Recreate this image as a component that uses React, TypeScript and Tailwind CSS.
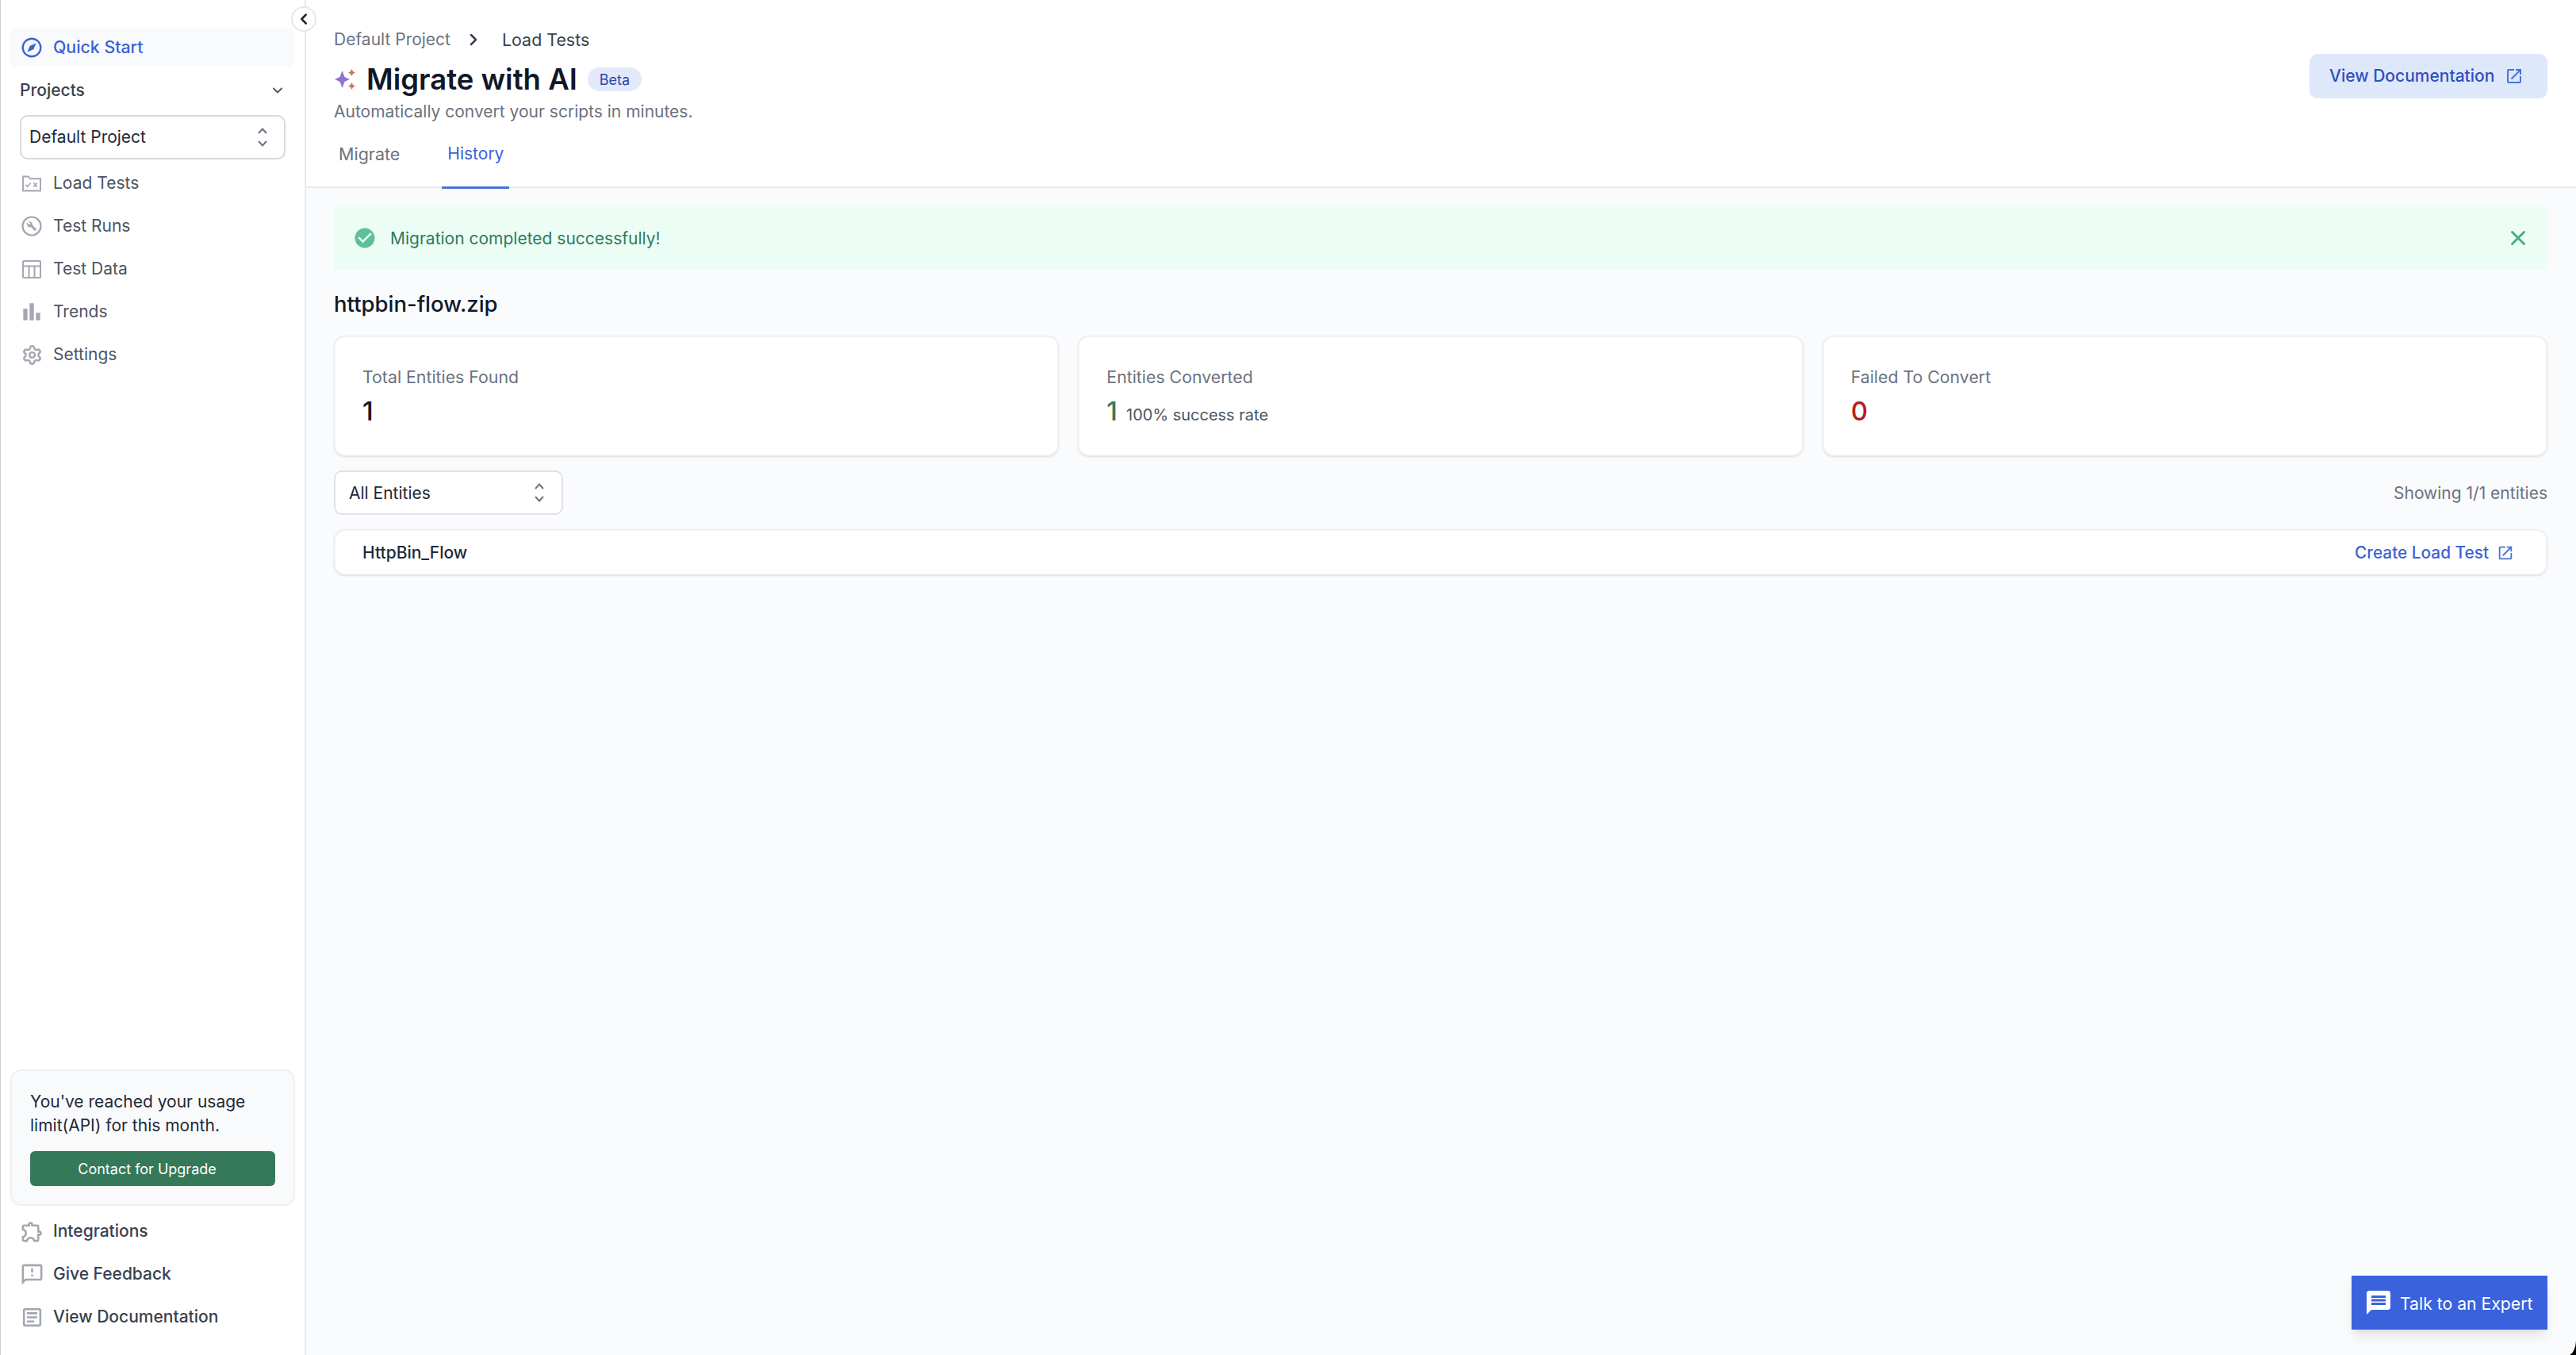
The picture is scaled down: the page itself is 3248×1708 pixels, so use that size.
import { ChevronDown, ChevronLeft, ChevronRight, Settings, X } from 'lucide-react'
import { MdBarChart, MdCheckCircle, MdMessage, MdOpenInNew, MdOutlineArticle, MdOutlineExtension, MdOutlineFeedback } from 'react-icons/md'

function CompassIcon() {
  return (
    <svg viewBox="0 0 26 26" className="h-[26px] w-[26px] shrink-0" fill="none">
      <circle cx="13" cy="13" r="11.3" stroke="#3b62d6" strokeWidth="2.4" />
      <path d="M18.500 7.500l-3.200 7.800-7.800 3.200 3.200-7.800z" fill="#3b62d6" />
    </svg>
  )
}

function LoadTestsIcon() {
  return (
    <svg viewBox="0 0 26 22" className="h-[21px] w-[26px] shrink-0" fill="none" stroke="#a3a8b0">
      <path d="M1.500 20.500V1.500h7l2.500 3h13.500v16z" strokeWidth="2" />
      <path d="M5 12.500l2.500 2.500 4-5" strokeWidth="1.8" />
      <path d="M15.500 10l4.500 5M20 10l-4.500 5" strokeWidth="1.8" />
    </svg>
  )
}

function TestRunsIcon() {
  return (
    <svg viewBox="0 0 26 26" className="h-[26px] w-[26px] shrink-0" fill="none">
      <circle cx="13" cy="13" r="11.500" stroke="#a3a8b0" strokeWidth="2.2" />
      <path d="M8.500 7.500a4.400 4.400 0 0 1 5.700 4.600l5 5-2.200 2.200-5-5a4.400 4.400 0 0 1-5-5.700l3 2.600 1.700-1.700z" fill="#a3a8b0" />
    </svg>
  )
}

function TestDataIcon() {
  return (
    <svg viewBox="0 0 24 23" className="h-[23px] w-[24px] shrink-0" fill="none" stroke="#a3a8b0" strokeWidth="2">
      <rect x="1" y="1" width="22" height="21" rx="1" />
      <path d="M1 7.500h22M8.500 7.500V22M15.500 7.500V22" />
    </svg>
  )
}

function Sparkles() {
  return (
    <svg viewBox="0 0 26 26" className="ml-[1px] h-[26px] w-[26px] shrink-0">
      <defs>
        <linearGradient id="spark" x1="0" y1="0" x2="1" y2="1">
          <stop offset="0" stopColor="#6f7ce0" />
          <stop offset="1" stopColor="#b06cc0" />
        </linearGradient>
      </defs>
      <path d="M9.500 2l3 8 6.500 3-6.500 3-3 8-3-8L0 13l6.500-3z" fill="url(#spark)" />
      <path d="M21.500 0l1.500 3 3 1.500-3 1.500-1.500 3-1.500-3-3-1.500 3-1.500z" fill="#d9695f" />
      <path d="M21.500 17l1.500 3 3 1.500-3 1.500-1.500 3-1.500-3-3-1.500 3-1.500z" fill="#d9695f" />
    </svg>
  )
}

function UpDown() {
  return (
    <svg viewBox="0 0 12 24" className="h-[24px] w-[12px] shrink-0" fill="none" stroke="#6b7280" strokeWidth="2">
      <path d="M1 7l5-5.500L11 7M1 17l5 5.500L11 17" />
    </svg>
  )
}

function NavItem({ icon, label, strong }: { icon: React.ReactNode; label: string; strong?: boolean }) {
  return (
    <div className="flex h-[54px] items-center pl-[26px]">
      <span className="flex w-[26px] justify-center">{icon}</span>
      <span className={`ml-[14px] text-[21px] ${strong ? 'font-medium text-[#374151]' : 'text-[#4b5563]'}`}>{label}</span>
    </div>
  )
}

function StatCard({ label, children }: { label: string; children: React.ReactNode }) {
  return (
    <div className="h-[152px] flex-1 rounded-[14px] border-2 border-[#f0f1f3] bg-white pl-[34px] pt-[36px] shadow-sm">
      <p className="text-[21.300px] leading-[28px] text-[#6b7280]">{label}</p>
      <div className="mt-[9px] flex items-baseline">{children}</div>
    </div>
  )
}

export default function App() {
  return (
    <div className="relative flex h-[1708px] w-[3248px] overflow-hidden bg-[#fafbfd] font-['Inter',sans-serif] antialiased">
      {/* Sidebar */}
      <aside className="flex w-[386px] shrink-0 flex-col border-l border-r-2 border-l-[#cfcfcf] border-r-[#e8eaed] bg-white">
        <div className="ml-[11px] mr-[12px] mt-[36px] flex h-[48px] items-center rounded-lg bg-[#f9fafb] pl-[15px]">
          <CompassIcon />
          <span className="ml-[14px] text-[21.300px] font-medium text-[#3b62d6]">Quick Start</span>
        </div>
        <div className="mt-[14px] flex h-[32px] items-center justify-between pl-[24px] pr-[24px]">
          <span className="text-[21px] font-medium text-[#374151]">Projects</span>
          <ChevronDown size={20} strokeWidth={2.2} className="text-[#4b5563]" />
        </div>
        <div className="mx-[24px] mt-[15px] flex h-[56px] items-center justify-between rounded-[10px] border-2 border-[#d7d9dd] pl-[10px] pr-[21px]">
          <span className="text-[21px] text-[#1f2937]">Default Project</span>
          <UpDown />
        </div>
        <div className="mt-[3px]">
          <NavItem icon={<LoadTestsIcon />} label="Load Tests" />
          <NavItem icon={<TestRunsIcon />} label="Test Runs" />
          <NavItem icon={<TestDataIcon />} label="Test Data" />
          <NavItem icon={<MdBarChart size={32} className="shrink-0 text-[#a3a8b0]" />} label="Trends" />
          <NavItem icon={<Settings size={27} strokeWidth={2.2} className="shrink-0 text-[#a3a8b0]" />} label="Settings" />
        </div>
        <div className="mx-[12px] mt-auto h-[172px] rounded-[14px] border-2 border-[#eef0f2] bg-[#f9fafb] px-[23px] pt-[24px]">
          <p className="text-[21px] leading-[30px] text-[#1f2937]">You've reached your usage limit(API) for this month.</p>
          <button className="mt-[17px] h-[44px] w-[309px] rounded-[6px] bg-[#35795a] pr-[14px] text-[18px] text-white">Contact for Upgrade</button>
        </div>
        <div className="mb-[21px] mt-[5px]">
          <NavItem strong icon={<MdOutlineExtension size={31} className="shrink-0 text-[#a3a8b0]" />} label="Integrations" />
          <NavItem strong icon={<MdOutlineFeedback size={31} className="shrink-0 text-[#a3a8b0]" />} label="Give Feedback" />
          <NavItem strong icon={<MdOutlineArticle size={31} className="shrink-0 text-[#a3a8b0]" />} label="View Documentation" />
        </div>
      </aside>

      {/* Main */}
      <main className="flex min-w-0 flex-1 flex-col">
        <header className="flex h-[237px] shrink-0 justify-between border-b-2 border-[#e8eaed] bg-white pl-[35px] pr-[36px]">
          <div>
            <div className="mt-[36px] flex h-[28px] items-center text-[21px]">
              <span className="text-[#6b7280]">Default Project</span>
              <ChevronRight size={24} strokeWidth={2.5} className="ml-[17px] text-[#374151]" />
              <span className="ml-[24px] text-[21.400px] text-[#374151]">Load Tests</span>
            </div>
            <div className="mt-[16px] flex h-[40px] items-center">
              <Sparkles />
              <h1 className="ml-[14px] text-[36.500px] font-semibold leading-none text-[#111827]">Migrate with AI</h1>
              <span className="ml-[13px] flex h-[30px] w-[68px] items-center justify-center rounded-full bg-[#e1e9fb] text-[18px] text-[#2f45a8]">Beta</span>
            </div>
            <p className="mt-[7px] text-[21px] leading-[28px] text-[#6b7280]">Automatically convert your scripts in minutes.</p>
            <div className="mt-[13px] flex h-[70px]">
              <span className="px-[6px] pt-[12px] text-[21.500px] leading-[28px] text-[#6b7280]">Migrate</span>
              <span className="ml-[47px] border-b-[3px] border-[#4a73d8] px-[7px] pt-[12px] text-[21px] leading-[28px] text-[#3b62d6]">History</span>
            </div>
          </div>
          <button className="mt-[68px] flex h-[56px] w-[300px] items-center rounded-[10px] bg-[#dde8fb] pl-[25px] text-[21px] font-medium text-[#2f4fc0]">
            View Documentation
            <MdOpenInNew size={24} className="ml-[13px] text-[#4a73d8]" />
          </button>
        </header>

        <section className="flex flex-1 flex-col pl-[35px] pr-[36px] pt-[22px]">
          <div className="flex h-[81px] items-center justify-between bg-[#ecfdf5] pl-[24px] pr-[22px]">
            <div className="flex items-center">
              <MdCheckCircle size={30} className="text-[#5cc098]" />
              <span className="ml-[17px] pt-[2px] text-[21px] text-[#2f7a5c]">Migration completed successfully!</span>
            </div>
            <X size={30} strokeWidth={2.4} className="text-[#4faa86]" />
          </div>

          <h2 className="mt-[26px] text-[27.500px] font-medium leading-[34px] text-[#111827]">httpbin-flow.zip</h2>

          <div className="mt-[23px] flex gap-[24px]">
            <StatCard label="Total Entities Found">
              <span className="text-[33px] font-medium leading-[40px] text-[#111827]">1</span>
            </StatCard>
            <StatCard label="Entities Converted">
              <span className="text-[33px] font-medium leading-[40px] text-[#35795a]">1</span>
              <span className="ml-[11px] text-[20px] text-[#4b5563]">100% success rate</span>
            </StatCard>
            <StatCard label="Failed To Convert">
              <span className="text-[33px] font-medium leading-[40px] text-[#b91c1c]">0</span>
            </StatCard>
          </div>

          <div className="mt-[18px] flex items-center justify-between">
            <div className="flex h-[56px] w-[289px] items-center justify-between rounded-[10px] border-2 border-[#dfe1e5] bg-white pl-[17px] pr-[22px]">
              <span className="pt-[2px] text-[21px] text-[#1f2937]">All Entities</span>
              <UpDown />
            </div>
            <span className="pt-[2px] text-[21px] text-[#6b7280]">Showing 1/1 entities</span>
          </div>

          <div className="mt-[18px] flex h-[58px] items-center justify-between rounded-[14px] border-2 border-[#f0f1f3] bg-white pl-[34px] pr-[40px] pt-[2px] shadow-sm">
            <span className="text-[21px] font-medium text-[#1f2937]">HttpBin_Flow</span>
            <span className="flex items-center text-[20.800px] font-medium text-[#3b62d6]">
              Create Load Test
              <MdOpenInNew size={22} className="ml-[10px] text-[#4a73d8]" />
            </span>
          </div>
        </section>
      </main>

      {/* Collapse toggle */}
      <button className="absolute left-[367px] top-[8px] flex h-[32px] w-[32px] items-center justify-center rounded-full border-2 border-[#e5e7eb] bg-white">
        <ChevronLeft size={22} strokeWidth={2.8} className="text-[#1f2937]" />
      </button>

      {/* Chat button */}
      <button className="absolute bottom-[32px] right-[36px] flex h-[68px] w-[247px] items-center bg-[#3a62dd] pl-[16px] text-[21.200px] text-white shadow-lg">
        <MdMessage size={36} />
        <span className="ml-[9px] pt-[3px]">Talk to an Expert</span>
      </button>

      {/* Window corner */}
      <svg viewBox="0 0 8 18" className="absolute bottom-0 right-0 h-[18px] w-[8px]">
        <path d="M8 0v18H0c4-2 7.500-8 8-18z" fill="#000" />
      </svg>
    </div>
  )
}
